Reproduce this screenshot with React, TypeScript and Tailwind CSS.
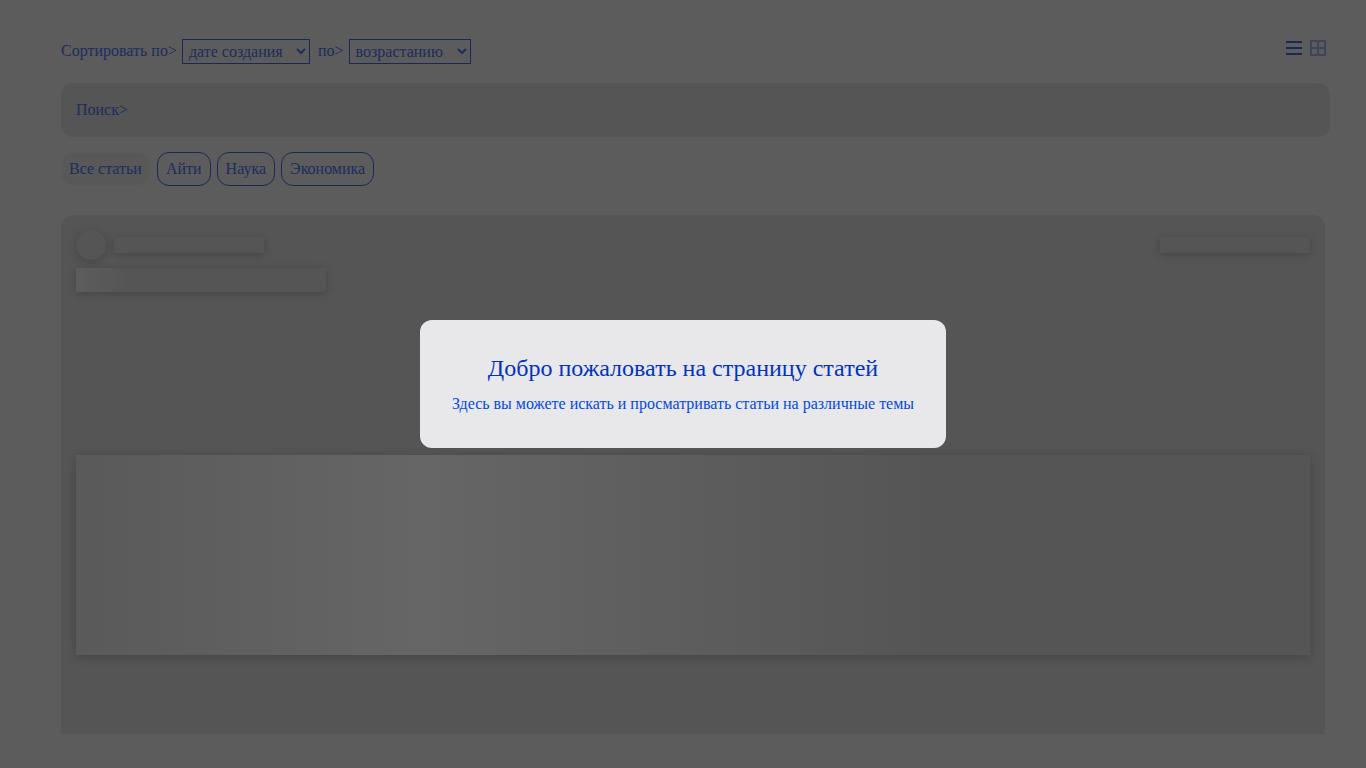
import { useState } from "react";
import type { ReactNode } from "react";

const categories = ["Все статьи", "Айти", "Наука", "Экономика"];

function Skeleton({ className, children }: { className: string; children?: ReactNode }) {
  return (
    <div className={`overflow-hidden bg-[#d4d4d4] shadow-[0_2px_10px_0_rgba(0,0,0,0.2)] ${className}`}>{children}</div>
  );
}

function ListIcon() {
  return (
    <svg width="18" height="18" viewBox="0 0 18 18" className="text-[#4064dc]" aria-hidden="true">
      <path d="M1 3h16M1 9h16M1 15h16" stroke="currentColor" strokeWidth="2" />
    </svg>
  );
}

function GridIcon() {
  return (
    <svg width="18" height="18" viewBox="0 0 18 18" className="text-[#a0aae0]" aria-hidden="true">
      <path d="M2 2h14v14H2zM9 2v14M2 9h14" fill="none" stroke="currentColor" strokeWidth="2" strokeLinejoin="round" />
    </svg>
  );
}

function Toolbar() {
  return (
    <div className="flex items-start justify-between">
      <div className="flex items-center">
        <label htmlFor="sort" className="mr-[5px] -mt-px">Сортировать по&gt;</label>
        <select id="sort" className="h-[25px] w-32 border border-[#4064dc] bg-transparent pl-0.5">
          <option>дате создания</option>
          <option>названию</option>
          <option>просмотрам</option>
        </select>
        <label htmlFor="order" className="mr-[5px] ml-2 -mt-px">по&gt;</label>
        <select id="order" className="h-[25px] w-[122px] border border-[#4064dc] bg-transparent pl-0.5">
          <option>возрастанию</option>
          <option>убыванию</option>
        </select>
      </div>
      <div className="mr-[3px] flex gap-1.5">
        <button type="button" aria-label="Список"><ListIcon /></button>
        <button type="button" aria-label="Плитка"><GridIcon /></button>
      </div>
    </div>
  );
}

function ArticleSkeleton() {
  return (
    <article className="mr-[5px] flex grow flex-col rounded-t-xl bg-[#d4d4d4] p-[15px]">
      <div className="flex items-center">
        <Skeleton className="size-[30px] rounded-full" />
        <Skeleton className="ml-2 h-4 w-[150px]" />
        <Skeleton className="ml-auto h-4 w-[150px]" />
      </div>
      <Skeleton className="mt-2 h-6 w-[250px]">
        <div className="h-full w-[52px] bg-linear-to-r from-[#e8e8e8] to-[#d4d4d4]" />
      </Skeleton>
      <Skeleton className="mt-[163px] h-[200px]">
        <div className="h-full w-[70%] bg-linear-to-r from-[#e0e0e0] via-[#ffffff] via-40% to-[#d4d4d4]" />
      </Skeleton>
    </article>
  );
}

export default function App() {
  const [open, setOpen] = useState(true);
  const [active, setActive] = useState(categories[0]);
  return (
    <div className="min-h-screen bg-[#e6e6e6] font-['Liberation_Serif',serif] text-base text-[#4c70e8]">
      <main className="flex min-h-screen flex-col pt-[39px] pr-9 pb-[34px] pl-[61px]">
        <Toolbar />
        <div className="mt-[19px] flex h-[54px] items-center rounded-xl bg-[#d4d4d4] px-[15px]">
          <label htmlFor="search">Поиск&gt;</label>
          <input id="search" type="text" className="min-w-0 grow bg-transparent px-1 outline-none" />
        </div>
        <div className="mt-[15px] mb-[29px] flex items-center gap-1.5">
          {categories.map((name) => (
            <button
              key={name}
              type="button"
              onClick={() => setActive(name)}
              className={
                name === active
                  ? "mr-px h-8 rounded-xl bg-[#dcdcdc] px-2"
                  : "h-[34px] rounded-xl border border-[#4064dc] px-2"
              }
            >
              {name}
            </button>
          ))}
        </div>
        <ArticleSkeleton />
      </main>
      {open && (
        <div className="fixed inset-0 flex items-center justify-center bg-black/60" onClick={() => setOpen(false)}>
          <div role="dialog" aria-modal="true" aria-labelledby="welcome" className="rounded-xl bg-[#e8e8ea] p-8 text-center">
            <h2 id="welcome" className="text-2xl text-[#0232c2]">Добро пожаловать на страницу статей</h2>
            <p className="mt-2 text-[#0449e0]">Здесь вы можете искать и просматривать статьи на различные темы</p>
          </div>
        </div>
      )}
    </div>
  );
}
